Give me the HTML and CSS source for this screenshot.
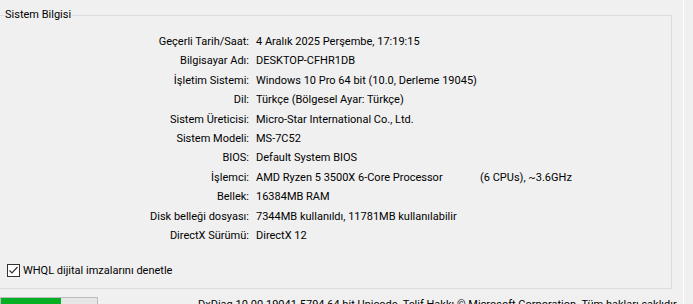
FILE: index.html
```html
<!DOCTYPE html>
<html lang="tr">
<head>
  <meta charset="UTF-8">
  <title>DirectX Tanı Aracı</title>
  <link rel="stylesheet" href="styles.css">
</head>
<body>
  <div class="page">
    <div class="main">
      <fieldset class="group">
        <legend>Sistem Bilgisi</legend>
        <div class="info">
          <div class="label">Geçerli Tarih/Saat:</div>
          <div class="value">4 Aralık 2025 Perşembe, 17:19:15</div>
          <div class="label">Bilgisayar Adı:</div>
          <div class="value">DESKTOP-CFHR1DB</div>
          <div class="label">İşletim Sistemi:</div>
          <div class="value">Windows 10 Pro 64 bit (10.0, Derleme 19045)</div>
          <div class="label">Dil:</div>
          <div class="value">Türkçe (Bölgesel Ayar: Türkçe)</div>
          <div class="label">Sistem Üreticisi:</div>
          <div class="value">Micro-Star International Co., Ltd.</div>
          <div class="label">Sistem Modeli:</div>
          <div class="value">MS-7C52</div>
          <div class="label">BIOS:</div>
          <div class="value">Default System BIOS</div>
          <div class="label">İşlemci:</div>
          <div class="value"><span class="cpu">AMD Ryzen 5 3500X 6-Core Processor</span>(6 CPUs), ~3.6GHz</div>
          <div class="label">Bellek:</div>
          <div class="value">16384MB RAM</div>
          <div class="label">Disk belleği dosyası:</div>
          <div class="value">7344MB kullanıldı, 11781MB kullanılabilir</div>
          <div class="label">DirectX Sürümü:</div>
          <div class="value">DirectX 12</div>
        </div>
        <label class="check">
          <svg class="box" width="13" height="13" viewBox="0 0 13 13">
            <rect x="0.5" y="0.5" width="12" height="12" fill="#fff" stroke="#333"/>
            <polyline points="2.5,6.5 5,9 10.5,3" fill="none" stroke="#333" stroke-width="1.2"/>
          </svg>
          <span>WHQL dijital imzalarını denetle</span>
        </label>
      </fieldset>
      <div class="footer">
        <div class="progress"><div class="fill"></div></div>
        <div class="copyright">DxDiag 10.00.19041.5794 64 bit Unicode&nbsp; Telif Hakkı © Microsoft Corporation. Tüm hakları saklıdır.</div>
      </div>
    </div>
    <div class="divider"></div>
  </div>
</body>
</html>
```
FILE: styles.css
```css
body {
  margin: 0;
  background-color: #f0f0f0;
  font-family: Roboto, "Liberation Sans", sans-serif;
  font-size: 11px;
  color: #000;
}
.page {
  display: flex;
  height: 304px;
  overflow: hidden;
}
.main {
  width: 672px;
  flex-shrink: 0;
}
.group {
  box-sizing: border-box;
  height: 282px;
  margin: 7px 0 0 0;
  padding: 0;
  border: 1px solid #dcdcdc;
  border-left: none;
  min-width: 0;
}
.group legend {
  margin-left: 4px;
  padding: 0 1px;
  line-height: 16px;
}
.info {
  display: grid;
  grid-template-columns: 249px 1fr;
  column-gap: 7px;
  margin-top: 9px;
}
.info div {
  line-height: 19.4px;
  white-space: nowrap;
}
.label {
  text-align: right;
}
.cpu {
  display: inline-block;
  width: 224px;
}
.check {
  display: flex;
  align-items: center;
  gap: 3px;
  margin: 19px 0 0 7px;
}
.check .box {
  display: block;
}
.footer {
  display: flex;
  align-items: flex-start;
  margin-top: 8px;
}
.progress {
  box-sizing: border-box;
  flex-shrink: 0;
  width: 98px;
  height: 20px;
  border: 1px solid #bcbcbc;
  background-color: #e6e6e6;
}
.progress .fill {
  width: 60px;
  height: 100%;
  background-color: #06b025;
}
.copyright {
  flex-shrink: 0;
  margin-left: 100px;
  line-height: 16px;
  white-space: nowrap;
}
.divider {
  width: 1px;
  margin-left: 11px;
  background-color: #fff;
}
```
